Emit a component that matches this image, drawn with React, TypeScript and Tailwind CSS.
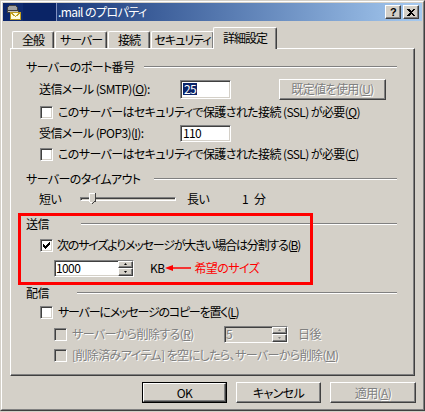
import React from "react";

const FONT = "font-['Noto_Sans_CJK_JP',sans-serif] [font-feature-settings:'palt'] tracking-[-0.6px]";
const RAISED =
  "border border-t-white border-l-white border-r-[#404040] border-b-[#404040] shadow-[inset_-1px_-1px_0_#808080]";
const SUNKEN =
  "border border-t-[#808080] border-l-[#808080] border-r-white border-b-white shadow-[inset_1px_1px_0_#404040,inset_-1px_-1px_0_#d4d0c8]";
const DIM = "text-[#808080] [text-shadow:1px_1px_0_#fff]";

function Check({ checked, disabled }: { checked?: boolean; disabled?: boolean }) {
  return (
    <span
      className={`w-[13px] h-[13px] shrink-0 flex items-center justify-center ${SUNKEN} ${
        disabled ? "bg-[#d4d0c8]" : "bg-white"
      }`}
    >
      {checked && (
        <svg width="7" height="7" viewBox="0 0 7 7" shapeRendering="crispEdges">
          <polygon points="0,2 2,4 7,-1 7,2 2,7 0,5" fill="#000" />
        </svg>
      )}
    </span>
  );
}

function Spin({ disabled }: { disabled?: boolean }) {
  const c = disabled ? "#808080" : "#000";
  return (
    <div className="flex flex-col w-[15px] h-full shrink-0">
      <div className={`flex-1 bg-[#d4d0c8] flex items-center justify-center ${RAISED}`}>
        <svg width="3" height="2" viewBox="0 0 3 2">
          <polygon points="1.5,0 3,2 0,2" fill={c} />
        </svg>
      </div>
      <div className={`flex-1 bg-[#d4d0c8] flex items-center justify-center ${RAISED}`}>
        <svg width="3" height="2" viewBox="0 0 3 2">
          <polygon points="0,0 3,0 1.5,2" fill={c} />
        </svg>
      </div>
    </div>
  );
}

function Header({ label, w }: { label: string; w: number }) {
  return (
    <div className="flex items-center h-4">
      <span className="shrink-0" style={{ width: w }}>
        {label}
      </span>
      <div className="flex-1 h-[2px] border-t border-t-[#808080] border-b border-b-white" />
    </div>
  );
}

function TitleIcon() {
  return (
    <svg width="16" height="16" viewBox="0 0 16 16" shapeRendering="crispEdges">
      <path d="M2 6 Q2 1 8 1 Q13 1 13 6 Z" fill="#a0a0a0" stroke="#404040" strokeWidth="1" />
      <rect x="2" y="6" width="11" height="2" fill="#c0c0c0" stroke="#404040" />
      <rect x="5.5" y="8.5" width="10" height="7" fill="#ffffe0" stroke="#c0a020" />
      <path d="M5.5 8.5 L10.5 12.5 L15.5 8.5" fill="none" stroke="#c0a020" />
    </svg>
  );
}

const TABS = ["全般", "サーバー", "接続", "セキュリティ"];
const TAB_W = [42, 52, 42, 63];

export default function App() {
  return (
    <div className={`w-[425px] h-[412px] bg-[#d4d0c8] text-[12px] leading-none text-black ${FONT}`}>
      <div className="w-[425px] h-[411px] border border-t-[#d4d0c8] border-l-[#d4d0c8] border-r-[#404040] border-b-[#404040]">
        <div className="h-full border border-t-white border-l-white border-r-[#808080] border-b-[#808080] p-px">
          {/* title bar */}
          <div className="h-[18px] flex items-center bg-gradient-to-r from-[#0a246a] to-[#a6caf0] pl-[2px] pr-[3px]">
            <TitleIcon />
            <span className="ml-[2px] w-[34px] h-[18px] bg-[#0a2466] border-r border-r-[#8090c0]" />
            <span className="ml-px text-white text-[12px]">.mail のプロパティ</span>
            <div className="ml-auto flex gap-[2px]">
              <div className={`w-4 h-[14px] bg-[#d4d0c8] flex items-center justify-center ${RAISED}`}>
                <span className="font-bold text-[11px] font-['Liberation_Sans',sans-serif]">?</span>
              </div>
              <div className={`w-4 h-[14px] bg-[#d4d0c8] flex items-center justify-center ${RAISED}`}>
                <svg width="8" height="7" viewBox="0 0 8 7" shapeRendering="crispEdges">
                  <path d="M0 0h2l2 2 2-2h2L5 3.5 8 7H6L4 5 2 7H0l3-3.5z" fill="#000" />
                </svg>
              </div>
            </div>
          </div>

          {/* tabs */}
          <div className="flex items-end h-[26px] pl-[9px] mt-[1px] tracking-[-1px]">
            {TABS.map((t, i) => (
              <div
                key={t}
                style={{ width: TAB_W[i] }}
                className="h-[17px] mr-px border-t border-l border-t-white border-l-white border-r border-r-[#404040] shadow-[inset_-1px_0_0_#808080] rounded-t-[2px] flex items-center justify-center"
              >
                {t}
              </div>
            ))}
            <div className="relative z-10 -ml-[2px] -mb-px w-[64px] h-[22px] bg-[#d4d0c8] border-t border-l border-t-white border-l-white border-r border-r-[#404040] shadow-[inset_-1px_0_0_#808080] rounded-t-[2px] flex items-center justify-center pb-[2px]">
              詳細設定
            </div>
          </div>

          {/* panel */}
          <div className="relative ml-[7px] w-[405px] h-[328px] border border-t-white border-l-white border-r-[#404040] border-b-[#404040] shadow-[inset_-1px_-1px_0_#808080] pl-[15px] pr-[17px] pt-[10px]">
            <Header label="サーバーのポート番号" w={118} />

            <div className="flex items-center h-5 mt-[4px] ml-[13px]">
              <span className="w-[141px]">送信メール (SMTP)(<u>O</u>):</span>
              <div className={`w-[51px] h-[19px] bg-white flex items-center px-[2px] ${SUNKEN}`}>
                <span className="bg-[#0a246a] text-white px-px">25</span>
              </div>
              <div className={`ml-[48px] w-[107px] h-[21px] flex items-center justify-center ${RAISED} ${DIM}`}>
                既定値を使用(<u>U</u>)
              </div>
            </div>

            <div className="flex items-center h-4 mt-[5px] ml-[14px] gap-[5px]">
              <Check />
              <span>このサーバーはセキュリティで保護された接続 (SSL) が必要(<u>Q</u>)</span>
            </div>

            <div className="flex items-center h-[18px] mt-[4px] ml-[13px]">
              <span className="w-[141px]">受信メール (POP3)(<u>I</u>):</span>
              <div className={`w-[51px] h-[17px] bg-white flex items-center px-[2px] ${SUNKEN}`}>
                <span>110</span>
              </div>
            </div>

            <div className="flex items-center h-4 mt-[4px] ml-[14px] gap-[5px]">
              <Check />
              <span>このサーバーはセキュリティで保護された接続 (SSL) が必要(<u>C</u>)</span>
            </div>

            <div className="mt-[9px]">
              <Header label="サーバーのタイムアウト" w={128} />
            </div>

            <div className="flex items-center h-4 mt-[4px] ml-[13px]">
              <span className="w-[41px]">短い</span>
              <div className="relative w-[96px] h-4 flex items-center">
                <div className={`w-full h-[4px] ${SUNKEN}`} />
                <svg className="absolute left-[9px] top-[2px]" width="7" height="11" viewBox="0 0 7 11" shapeRendering="crispEdges">
                  <path d="M0 0h7v8l-3.5 3L0 8z" fill="#d4d0c8" />
                  <path d="M0 8V0h6" fill="none" stroke="#fff" />
                  <path d="M6.5 0v8L3.5 10.5" fill="none" stroke="#404040" />
                  <path d="M0.5 8.5L3.5 10.5" fill="none" stroke="#fff" />
                </svg>
              </div>
              <span className="ml-[11px] w-[55px]">長い</span>
              <span className="tracking-normal">1&nbsp;&nbsp;分</span>
            </div>

            <div className="mt-[9px]">
              <Header label="送信" w={55} />
            </div>

            <div className="flex items-center h-4 mt-[5px] ml-[14px] gap-[4px]">
              <Check checked />
              <span className="tracking-[-1.2px]">次のサイズよりメッセージが大きい場合は分割する(<u>B</u>)</span>
            </div>

            <div className="flex items-center h-[18px] mt-[6px] ml-[28px]">
              <div className={`w-[80px] h-[17px] bg-white flex items-center ${SUNKEN}`}>
                <span className="flex-1 pl-px">1000</span>
                <Spin />
              </div>
              <span className="ml-[16px]">KB</span>
              <svg width="26" height="6" viewBox="0 0 26 6" className="ml-px">
                <polygon points="0,3 8,0 8,2.2 26,2.2 26,3.8 8,3.8 8,6" fill="#ff0000" />
              </svg>
              <span className="ml-[3px] text-[#ff0000]">希望のサイズ</span>
            </div>

            <div className="mt-[8px]">
              <Header label="配信" w={51} />
            </div>

            <div className="flex items-center h-4 mt-[3px] ml-[14px] gap-[5px]">
              <Check />
              <span className="tracking-[-1.2px]">サーバーにメッセージのコピーを置く(<u>L</u>)</span>
            </div>

            <div className="flex items-center h-[18px] mt-[5px] ml-[28px]">
              <Check disabled />
              <span className={`ml-[5px] w-[152px] ${DIM}`}>サーバーから削除する(<u>R</u>)</span>
              <div className={`w-[64px] h-[17px] bg-[#d4d0c8] flex items-center ${SUNKEN}`}>
                <span className={`flex-1 pl-px ${DIM}`}>5</span>
                <Spin disabled />
              </div>
              <span className={`ml-[10px] ${DIM}`}>日後</span>
            </div>

            <div className="flex items-center h-4 mt-[4px] ml-[28px]">
              <Check disabled />
              <span className={`ml-[5px] ${DIM}`}>[削除済みアイテム] を空にしたら、サーバーから削除(<u>M</u>)</span>
            </div>

            {/* annotation */}
            <div className="absolute left-[7px] top-[164px] w-[295px] h-[72px] border-[3px] border-[#ff0000] pointer-events-none" />
          </div>

          {/* buttons */}
          <div className="flex justify-end gap-[9px] mt-[6px] pr-[6px]">
            <div className="w-[85px] h-[21px] border border-black">
              <div className={`w-full h-full flex items-center justify-center ${RAISED}`}>OK</div>
            </div>
            <div className={`w-[85px] h-[21px] flex items-center justify-center ${RAISED}`}>キャンセル</div>
            <div className={`w-[86px] h-[21px] flex items-center justify-center ${RAISED} ${DIM}`}>
              適用(<u>A</u>)
            </div>
          </div>
        </div>
      </div>
    </div>
  );
}
